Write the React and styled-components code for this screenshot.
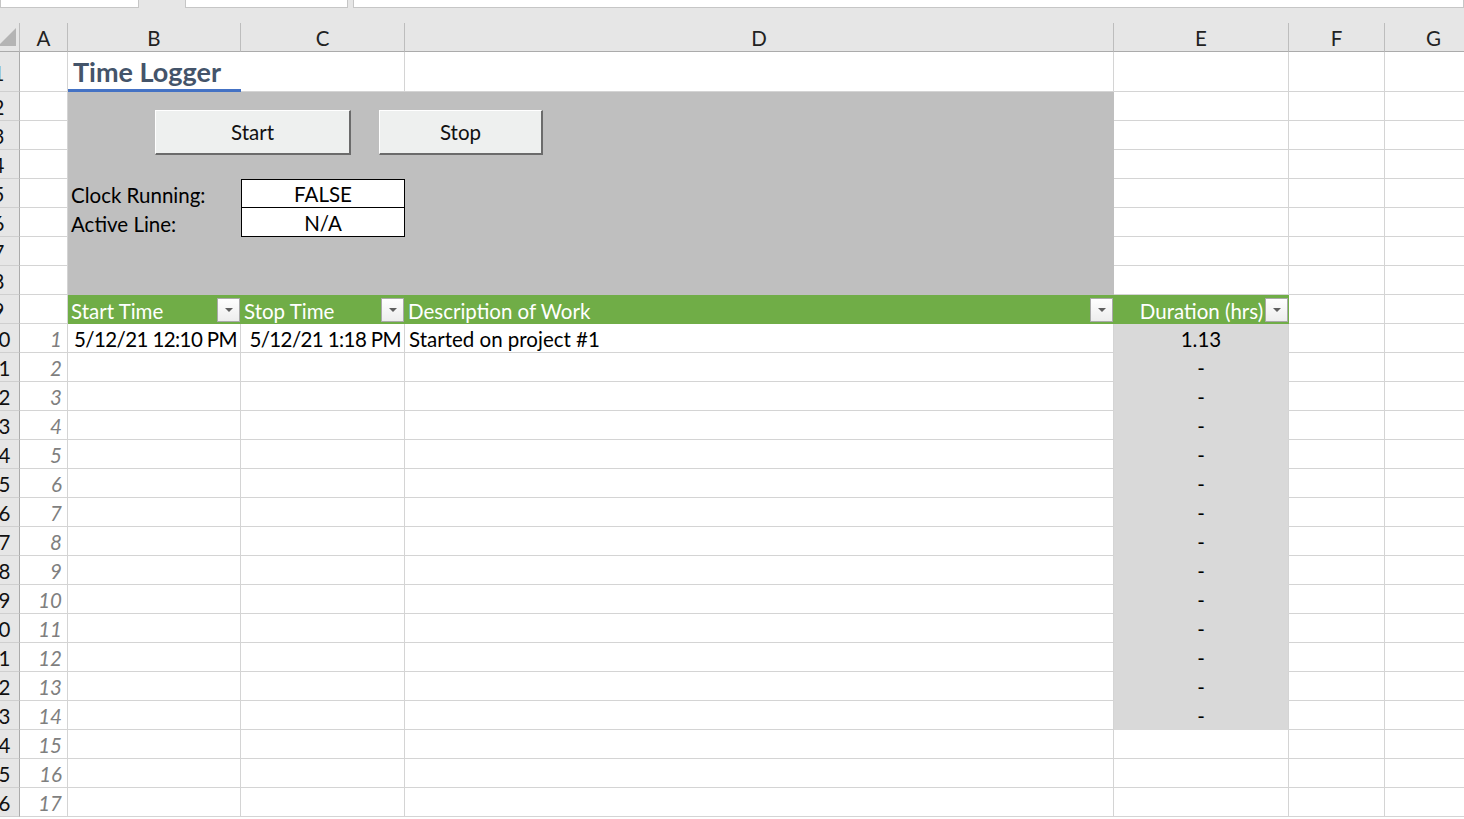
import React from 'react';
import styled, { createGlobalStyle } from 'styled-components';

const GlobalStyle = createGlobalStyle`
  html, body {
    margin: 0;
    padding: 0;
    background: #ffffff;
    overflow: hidden;
  }
  body {
    font-family: Lato, "Liberation Sans", sans-serif;
    color: #000;
  }
`;

const gridLine = '#d4d4d4';
const headerGray = '#e6e6e6';
const green = '#70ad47';
const panelGray = '#bfbfbf';
const durationGray = '#d9d9d9';

const Window = styled.div`
  width: 1464px;
  height: 819px;
  overflow: hidden;
  font-size: 20.5px;
`;

const TopStrip = styled.div`
  height: 23px;
  background: ${headerGray};
  display: flex;
  align-items: flex-start;
`;

const Tab = styled.div`
  width: ${p => p.$w ? `${p.$w}px` : 'auto'};
  flex: ${p => p.$w ? 'none' : '1'};
  background: #fff;
  border: 1px solid #c6c6c6;
  border-top: none;
  box-sizing: border-box;
  height: 8px;
`;

const TabGap = styled.div`
  width: ${p => p.$w}px;
  height: 8px;
`;

const Sheet = styled.div`
  display: grid;
  grid-template-columns: 40px 48px 173px 164px 709px 175px 96px 98px;
  grid-template-rows: 29px 40px;
  grid-auto-rows: 29px;
  margin-left: -20px;
`;

const Corner = styled.div`
  background: ${headerGray};
  border-right: 1px solid #bdbdbd;
  border-bottom: 1px solid #ababab;
  box-sizing: border-box;
  display: flex;
  justify-content: flex-end;
  align-items: flex-end;
  padding: 0 3px 5px 0;
`;

const ColHeader = styled.div`
  background: ${headerGray};
  border-right: 1px solid #bdbdbd;
  border-bottom: 1px solid #ababab;
  box-sizing: border-box;
  display: flex;
  align-items: center;
  justify-content: center;
  padding-top: 2px;
  color: #222;
`;

const RowHeader = styled.div`
  background: ${headerGray};
  border-right: 1px solid #ababab;
  border-bottom: 1px solid #cfcfcf;
  box-sizing: border-box;
  display: flex;
  align-items: center;
  justify-content: center;
  padding: 2px 2px 0 0;
  color: #111;
`;

const Cell = styled.div`
  box-sizing: border-box;
  border-right: 1px solid ${gridLine};
  border-bottom: 1px solid ${gridLine};
  display: flex;
  align-items: center;
  justify-content: ${p => p.$align === 'right' ? 'flex-end' : p.$align === 'center' ? 'center' : 'flex-start'};
  padding: 2px 4px 0;
  white-space: nowrap;
  overflow: hidden;
`;

const DateCell = styled(Cell)`
  justify-content: flex-end;
  letter-spacing: -0.6px;
  padding-right: 3px;
`;

const IndexCell = styled(Cell)`
  justify-content: flex-end;
  font-style: italic;
  color: #7f7f7f;
  padding-right: 5px;
`;

const DurationCell = styled(Cell)`
  background: ${durationGray};
  border-bottom-color: ${durationGray};
  justify-content: center;
`;

const TitleCell = styled.div`
  box-sizing: border-box;
  border-bottom: 3px solid #4472c4;
  display: flex;
  align-items: flex-end;
  padding: 0 0 1px 5px;
  font-size: 27px;
  font-weight: 700;
  color: #44546a;
  white-space: nowrap;
`;

const Panel = styled.div`
  grid-column: 3 / 6;
  grid-row: 3 / 10;
  background: ${panelGray};
  display: grid;
  grid-template-columns: 173px 164px 1fr;
  grid-template-rows: 87px 29px 29px 1fr;
`;

const ButtonBar = styled.div`
  grid-column: 1 / -1;
  display: flex;
  align-items: flex-start;
  gap: 28px;
  padding: 18px 0 0 87px;
`;

const MacroButton = styled.button`
  width: ${p => p.$w}px;
  height: 45px;
  box-sizing: border-box;
  background: #eef0ef;
  border-top: 1px solid #ffffff;
  border-left: 1px solid #ffffff;
  border-right: 2px solid #6b6b6b;
  border-bottom: 2px solid #6b6b6b;
  font-family: inherit;
  font-size: 20.5px;
  color: #111;
  padding: 0;
  cursor: pointer;
`;

const FieldLabel = styled.div`
  display: flex;
  align-items: center;
  padding: 2px 0 0 3px;
  grid-column: 1;
`;

const ValueBox = styled.div`
  grid-column: 2;
  box-sizing: border-box;
  border: 1px solid #000;
  border-top: ${p => p.$first ? '1px solid #000' : 'none'};
  background: #fff;
  display: flex;
  align-items: center;
  justify-content: center;
  padding-top: 1px;
`;

const HeadCell = styled.div`
  position: relative;
  background: ${green};
  color: #fff;
  display: flex;
  align-items: center;
  justify-content: ${p => p.$center ? 'center' : 'flex-start'};
  padding: 2px ${p => p.$center ? '0' : '3px'} 0;
  white-space: nowrap;
`;

const FilterButton = styled.span`
  position: absolute;
  right: 1px;
  top: 3px;
  width: 23px;
  height: 24px;
  box-sizing: border-box;
  border: 1px solid #a9a9a9;
  background: linear-gradient(#fefefe, #ededed);
  display: flex;
  align-items: center;
  justify-content: center;

  &::after {
    content: '';
    border-left: 4px solid transparent;
    border-right: 4px solid transparent;
    border-top: 4px solid #5f5f5f;
  }
`;

const columns = ['A', 'B', 'C', 'D', 'E', 'F', 'G'];

const entries = [
  { start: '5/12/21 12:10 PM', stop: '5/12/21 1:18 PM', desc: 'Started on project #1', duration: '1.13' },
];

const CornerMark = () => (
  <svg width="18" height="18" viewBox="0 0 18 18">
    <polygon points="0,18 18,18 18,0" fill="#b4b4b4" />
  </svg>
);

export default function App() {
  const dataRows = [];
  for (let i = 1; i <= 17; i++) {
    const entry = entries[i - 1];
    const rowNum = i + 9;
    dataRows.push(
      <React.Fragment key={rowNum}>
        <RowHeader>{rowNum}</RowHeader>
        <IndexCell>{i}</IndexCell>
        <DateCell>{entry ? entry.start : ''}</DateCell>
        <DateCell>{entry ? entry.stop : ''}</DateCell>
        <Cell>{entry ? entry.desc : ''}</Cell>
        {i <= 14
          ? <DurationCell>{entry ? entry.duration : '-'}</DurationCell>
          : <Cell />}
        <Cell />
        <Cell />
      </React.Fragment>
    );
  }

  const panelRows = [];
  for (let r = 2; r <= 8; r++) {
    panelRows.push(
      <React.Fragment key={r}>
        <RowHeader>{r}</RowHeader>
        <Cell />
        <Cell />
        <Cell />
        <Cell />
      </React.Fragment>
    );
  }

  return (
    <Window>
      <GlobalStyle />
      <TopStrip>
        <Tab $w={139} />
        <TabGap $w={46} />
        <Tab $w={163} />
        <TabGap $w={5} />
        <Tab />
      </TopStrip>
      <Sheet>
        <Corner><CornerMark /></Corner>
        {columns.map(c => <ColHeader key={c}>{c}</ColHeader>)}

        <RowHeader>1</RowHeader>
        <Cell />
        <TitleCell>Time Logger</TitleCell>
        <Cell />
        <Cell />
        <Cell />
        <Cell />
        <Cell />

        <Panel>
          <ButtonBar>
            <MacroButton $w={196}>Start</MacroButton>
            <MacroButton $w={164}>Stop</MacroButton>
          </ButtonBar>
          <FieldLabel>Clock Running:</FieldLabel>
          <ValueBox $first>FALSE</ValueBox>
          <FieldLabel>Active Line:</FieldLabel>
          <ValueBox>N/A</ValueBox>
        </Panel>
        {panelRows}

        <RowHeader>9</RowHeader>
        <Cell />
        <HeadCell>Start Time<FilterButton /></HeadCell>
        <HeadCell>Stop Time<FilterButton /></HeadCell>
        <HeadCell>Description of Work<FilterButton /></HeadCell>
        <HeadCell $center>Duration (hrs)<FilterButton /></HeadCell>
        <Cell />
        <Cell />

        {dataRows}
      </Sheet>
    </Window>
  );
}
